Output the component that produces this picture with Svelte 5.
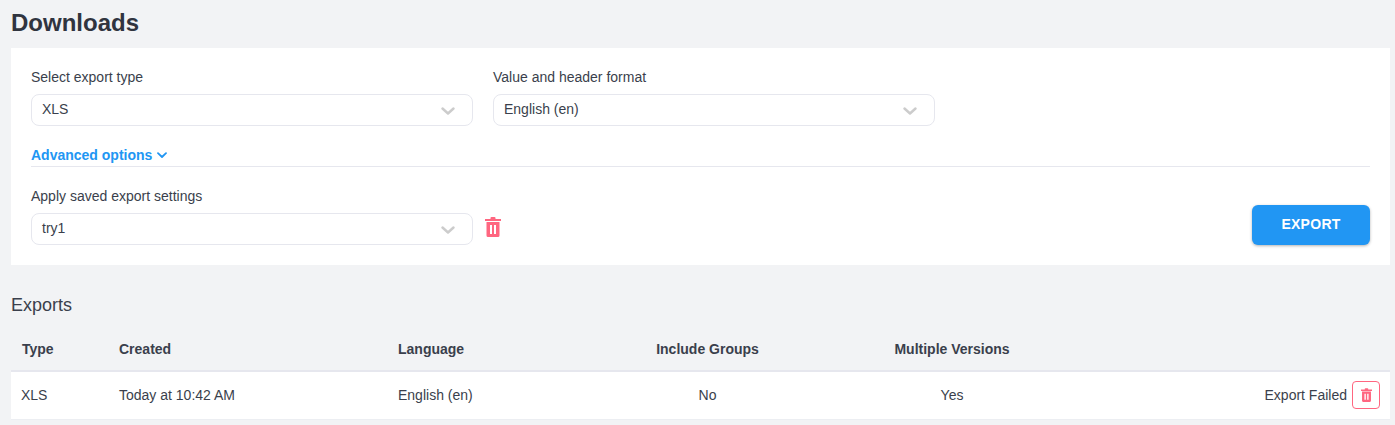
<script lang="ts">
  const rows = [
    { type: "XLS", created: "Today at 10:42 AM", language: "English (en)", groups: "No", versions: "Yes", status: "Export Failed" }
  ];
</script>

{#snippet chevron()}
  <svg class="chevron" width="14" height="8" viewBox="0 0 14 8" fill="none" aria-hidden="true">
    <path d="M1.500 1.500 7 6.500l5.500-5" stroke="#ccc" stroke-width="2.400" stroke-linecap="round" stroke-linejoin="round" />
  </svg>
{/snippet}

{#snippet trash(w, h)}
  <svg width={w} height={h} viewBox="0 0 16 20" aria-hidden="true">
    <path fill="#ff6680" d="M5.500 2V1a1 1 0 0 1 1-1h3a1 1 0 0 1 1 1v1H16v2H0V2h5.500Z" />
    <path fill="#ff6680" fill-rule="evenodd" d="M1.500 5h13v13.500a1.500 1.500 0 0 1-1.500 1.500H3a1.500 1.500 0 0 1-1.500-1.500V5ZM5 8v9h2V8H5Zm4 0v9h2V8H9Z" />
  </svg>
{/snippet}

<main class="page">
  <h1>Downloads</h1>

  <section class="card">
    <div class="fields">
      <div class="field">
        <span class="label">Select export type</span>
        <div class="select"><span>XLS</span>{@render chevron()}</div>
      </div>
      <div class="field">
        <span class="label">Value and header format</span>
        <div class="select"><span>English (en)</span>{@render chevron()}</div>
      </div>
    </div>

    <div class="advanced">
      <span>Advanced options</span>
      <svg width="10" height="7" viewBox="0 0 10 7" fill="none" aria-hidden="true">
        <path d="M1 1.200 5 5l4-3.800" stroke="#2196f3" stroke-width="1.800" stroke-linecap="round" stroke-linejoin="round" />
      </svg>
    </div>

    <div class="saved">
      <div class="field">
        <span class="label">Apply saved export settings</span>
        <div class="select"><span>try1</span>{@render chevron()}</div>
      </div>
      <button class="delete-saved" aria-label="Delete saved settings">{@render trash(16, 20)}</button>
      <button class="export">EXPORT</button>
    </div>
  </section>

  <h2>Exports</h2>

  <div class="table">
    <div class="row head">
      <div>Type</div>
      <div>Created</div>
      <div>Language</div>
      <div class="center">Include Groups</div>
      <div class="center">Multiple Versions</div>
      <div></div>
    </div>
    {#each rows as r}
      <div class="row body">
        <div>{r.type}</div>
        <div>{r.created}</div>
        <div>{r.language}</div>
        <div class="center">{r.groups}</div>
        <div class="center">{r.versions}</div>
        <div class="status">
          <span>{r.status}</span>
          <button class="delete-row" aria-label="Delete export">{@render trash(11, 14)}</button>
        </div>
      </div>
    {/each}
  </div>
</main>

<style>
  :global(body) { margin: 0; background: #f2f3f5; }
  .page { height: 425px; overflow: hidden; padding: 0 5px 0 11px; box-sizing: border-box; font-family: "Liberation Sans", Arial, sans-serif; font-size: 14px; color: #3a3f4c; }
  h1 { margin: 0; height: 48px; line-height: 46px; font-size: 24px; font-weight: 700; color: #30343f; }
  h2 { margin: 29px 0 0; height: 22px; line-height: 22px; font-size: 18px; font-weight: 400; color: #3a3f4c; }

  .card { background: #fff; padding: 20px; height: 217px; box-sizing: border-box; }
  .fields { display: flex; gap: 20px; }
  .field { display: flex; flex-direction: column; width: 442px; }
  .label { height: 26px; line-height: 18px; }
  .select { display: flex; align-items: center; justify-content: space-between; height: 32px; box-sizing: border-box; padding: 0 17px 2px 10px; border: 1px solid #e6e7ee; border-radius: 8px; }
  .chevron { margin-top: 4px; }

  .advanced { display: flex; align-items: center; gap: 5px; height: 22px; margin-top: 16px; padding-top: 2px; border-bottom: 1px solid #e6e7ee; color: #2196f3; font-weight: 700; }

  .saved { display: flex; align-items: flex-end; margin-top: 20px; }
  .delete-saved { margin: 0 0 8px 12px; padding: 0; border: 0; background: none; line-height: 0; }
  .export { margin-left: auto; width: 118px; height: 40px; padding: 0 0 2px; border: 0; border-radius: 6px; background: #2196f3; color: #fff; font: 700 14px "Liberation Sans", Arial, sans-serif; letter-spacing: 0.02em; box-shadow: 0 1px 3px rgba(0, 0, 0, 0.3); }

  .table { margin-top: 11px; }
  .row { display: grid; grid-template-columns: 98px 279px 210px 219px 270px 1fr; align-items: center; }
  .row > div:not(.center):not(.status) { padding-left: 10px; }
  .center { text-align: center; }
  .head { height: 43px; font-weight: 700; border-bottom: 2px solid #e6e7ee; }
  .head > div { padding-top: 1px; }
  .head > div:first-child { padding-left: 11px !important; }
  .body { height: 47px; background: #fff; border-bottom: 1px solid #eceef2; }
  .body > div { padding-bottom: 1px; }
  .status { display: flex; align-items: center; justify-content: flex-end; gap: 5px; padding-right: 10px; }
  .delete-row { display: flex; align-items: center; justify-content: center; width: 28px; height: 28px; padding: 0; border: 1px solid #ff6680; border-radius: 4px; background: #fff; }
</style>
